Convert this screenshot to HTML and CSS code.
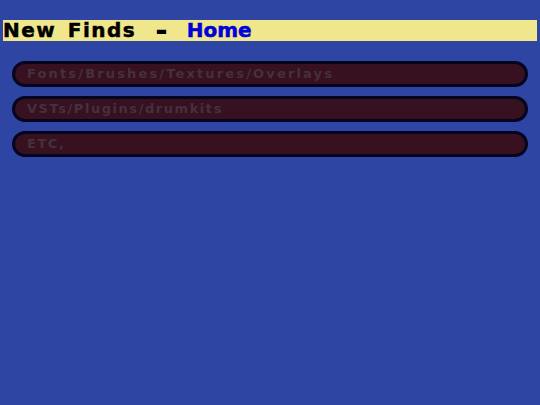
FILE: index.html
```html
<!DOCTYPE html>
<html lang="en">
<head>
  <meta charset="UTF-8">
  <title>New Finds - Home</title>
  <link rel="stylesheet" href="styles.css">
</head>
<body>

<h1 class="title">
  <span class="title-text">New Finds</span>
  <span class="title-dash">-</span>
  <span class="title-page">Home</span>
</h1>

<div class="links">
  <a href="#" class="link link-wide">Fonts/Brushes/Textures/Overlays</a>
  <a href="#" class="link">VSTs/Plugins/drumkits</a>
  <a href="#" class="link">ETC,</a>
</div>

</body>
</html>
```

FILE: styles.css
```css
body {
  font-family: "DejaVu Sans", sans-serif;
  background-color: #2f45a3;
  margin: 0;
  padding: 20px 3px 0;
  height: 405px;
  box-sizing: border-box;
  overflow: hidden;
}

.title {
  display: flex;
  align-items: center;
  height: 21px;
  margin: 0;
  background-color: #f0e68c;
  color: #000;
  font-size: 20px;
  font-weight: bold;
  letter-spacing: 1.5px;
  word-spacing: 3px;
  line-height: 21px;
  white-space: nowrap;
  -webkit-text-stroke: 0.5px currentColor;
}

.title-dash {
  margin-left: 19px;
  font-size: 30px;
  letter-spacing: 0;
  -webkit-text-stroke: 0;
}

.title-page {
  margin-left: 19px;
  color: #0000d8;
  letter-spacing: 0;
}

.links {
  display: flex;
  flex-direction: column;
  gap: 9.5px;
  margin: 20px 9px 0;
}

.link {
  display: block;
  height: 25.5px;
  padding: 0 12px;
  box-sizing: border-box;
  background-color: #37111f;
  border: 3px solid #05051f;
  border-radius: 13px;
  color: #46303c;
  font-size: 13px;
  font-weight: bold;
  letter-spacing: 1.55px;
  line-height: 19px;
  text-decoration: none;
  white-space: nowrap;
}

.link-wide {
  letter-spacing: 2.15px;
}
```
